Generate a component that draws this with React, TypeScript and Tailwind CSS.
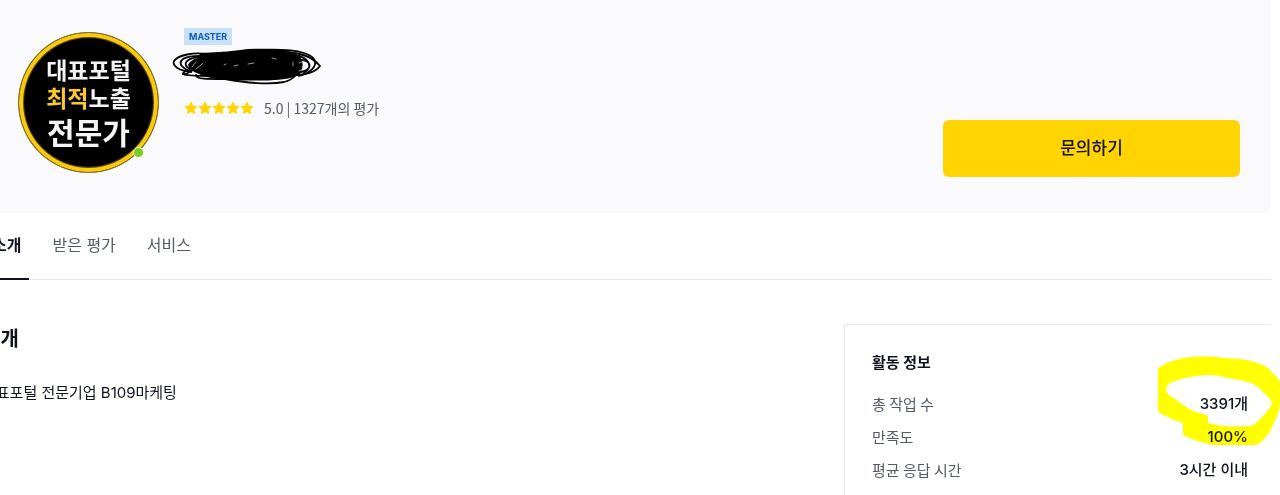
import React from 'react';

const TABS = [
  { label: '소개', active: true },
  { label: '받은 평가', active: false },
  { label: '서비스', active: false },
];

const STATS = [
  { label: '총 작업 수', value: '3391개' },
  { label: '만족도', value: '100%' },
  { label: '평균 응답 시간', value: '3시간 이내' },
];

const Star: React.FC = () => (
  <svg viewBox="0 0 14 14" className="w-[14px] h-[14px]" fill="#ffd400" stroke="#ffd400" strokeWidth="1.2" strokeLinejoin="round" aria-hidden="true">
    <path d="M7 1.4 8.6 5l4 .5-2.9 2.7.8 4L7 10.4l-3.5 1.8.8-4L1.4 5.5l4-.5Z" />
  </svg>
);

// 이름을 가린 낙서
const Scribble: React.FC = () => (
  <svg viewBox="0 0 150 38" className="w-[150px] h-[38px] -ml-3" fill="none" stroke="#000" strokeWidth="1.8" strokeLinecap="round" aria-hidden="true">
    <path d="M29 6 Q58 5 76 2 Q96 1 112 3 Q124 6 128 10 Q132 19 127 26 Q118 31 96 31.5 Q63 32 47 30 Q33 29 27 25 Q18 22 17 17 Q20 12 26 11Z" fill="#000" />
    <path d="M34 6 C22 4 6 7 2 13 C0 18 7 23 20 24 C9 20 6 15 11 11 C18 7 26 8 33 8" />
    <path d="M30 9 C16 9 11 15 15 19 C22 23 14 27 11 26 C10 23 21 21 27 23" />
    <path d="M11 26 C15 28 31 28 40 28 M24 27 C23 32 42 31 57 31" />
    <path d="M53 31 C70 34 97 37 112 34 C120 32 122 29 124 27" />
    <path d="M90 2 C112 1 132 3 140 9 C147 15 142 24 127 28" />
    <path d="M110 4 C132 4 143 12 148 18 C143 25 133 27 121 27" />
    <path d="M122 7 C137 9 142 19 132 25 M128 12 C139 12 142 21 129 24" />
    <path d="M20 19l4-5M24 21l5-4M29 17l2-2M52 17l2-1M62 18l4-1M76 16l6-1M100 10l4 1M121 14v4M127 15l5-2M130 19l5-2M127 23l4-2" stroke="#d8d8dc" strokeWidth=".7" />
  </svg>
);

// 형광펜 표시
const Highlight: React.FC = () => (
  <svg viewBox="0 0 122 92" className="absolute -right-8 -top-8 w-[122px] h-[92px] mix-blend-multiply pointer-events-none" aria-hidden="true">
    <path
      fill="#ffff00"
      fillRule="evenodd"
      d="M0 13 Q3 9 12 6 Q24 1 36 1 Q50 -1 66 2 L82 3 Q96 5 105 9 Q113 13 116 19 Q121 21 122 28 V48 Q121 58 115 69 Q111 79 105 84 Q101 89 96 89 H56 Q38 86 25 79 V67 Q12 63 2 57 L0 55ZM8 33 Q9 27 17 25 Q31 20 49 19 Q60 19 69 22 Q83 24 93 27 Q100 30 105 36 Q113 43 114 47 Q111 55 100 65 Q96 71 88 70 Q68 72 50 67 V60 Q42 56 35 55 Q24 49 16 42 Q8 38 8 33Z"
    />
  </svg>
);

const App: React.FC = () => {
  return (
    <div className="overflow-hidden pr-[9px] bg-white font-[Inter,'Noto_Sans_CJK_KR',sans-serif] text-[#10131f]">
      <header className="bg-[#fafafc] pt-8 pb-9 pl-[18px] pr-[31px]">
        <div className="flex justify-between min-h-[145px]">
          <div className="flex items-start gap-[25px]">
            <div className="relative shrink-0 w-[141px] h-[141px] rounded-full border border-[#8a7424] bg-black shadow-[inset_0_0_0_4px_#f9cb10,inset_0_0_1px_5px_#6b5407] flex flex-col items-center justify-center font-['Noto_Sans_CJK_KR',sans-serif] font-bold text-[#f4f4f4]">
              <span className="text-[23px] leading-[28px]">대표포털</span>
              <span className="text-[23px] leading-[28px]">
                <span className="text-[#fdc82a]">최적</span>노출
              </span>
              <span className="text-[30px] leading-[40px]">전문가</span>
              <span className="absolute right-[14px] bottom-[14px] w-[11px] h-[11px] rounded-full border border-white bg-[#75cf1b]" />
            </div>
            <div className="flex flex-col items-start -mt-1">
              <span className="bg-[#c9e0fa] text-[#0a5cc0] text-[9px] leading-[17px] font-bold px-[5px]">MASTER</span>
              <h1 className="mt-[3px]">
                <Scribble />
              </h1>
              <div className="flex items-center gap-[10px] mt-[10px]">
                <div className="flex">
                  {[1, 2, 3, 4, 5].map((n) => (
                    <Star key={n} />
                  ))}
                </div>
                <p className="font-['Noto_Sans_CJK_KR',sans-serif] text-[14px] leading-6 text-[#555a65]">5.0 | 1327개의 평가</p>
              </div>
            </div>
          </div>
          <button type="button" className="self-end w-[297px] h-[57px] rounded-md bg-[#ffd400] text-[17px] font-medium">
            문의하기
          </button>
        </div>
      </header>

      <nav className="flex gap-[15px] border-b border-[#e6e8ee] -ml-4">
        {TABS.map((tab) => (
          <a
            key={tab.label}
            href="#"
            className={`px-2 pt-5 pb-[21px] -mb-px text-[16px] leading-6 border-b-2 whitespace-nowrap ${tab.active ? 'font-bold border-[#10131f]' : 'border-transparent text-[#555a65]'}`}
          >
            {tab.label}
          </a>
        ))}
      </nav>

      <main className="flex justify-between pt-11">
        <section className="-ml-[18px]">
          <h2 className="text-[20px] leading-[30px] font-bold">소개</h2>
          <p className="mt-[27px] text-[15px] leading-6">대표포털 전문기업 B109마케팅</p>
        </section>

        <aside className="w-[427px] border-l border-t border-[#e6e8ee] pt-[26px] pl-[27px] pr-[23px] pb-8">
          <h3 className="text-[15px] leading-6 font-bold">활동 정보</h3>
          <div className="relative mt-[13px]">
            <dl>
              {STATS.map((stat) => (
                <div key={stat.label} className="flex justify-between text-[15px] leading-8 mb-px">
                  <dt className="font-['Noto_Sans_CJK_KR',sans-serif] text-[#555a65]">{stat.label}</dt>
                  <dd className="font-medium">{stat.value}</dd>
                </div>
              ))}
            </dl>
            <Highlight />
          </div>
        </aside>
      </main>
    </div>
  );
};

export default App;
